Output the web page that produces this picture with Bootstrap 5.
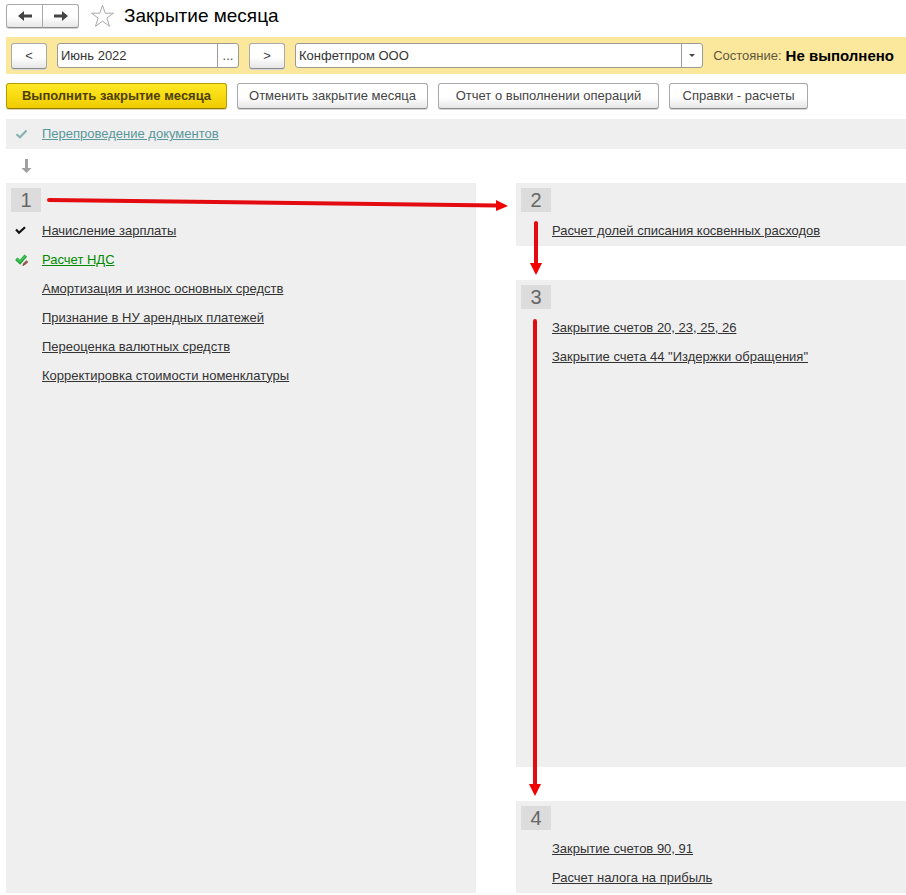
<!DOCTYPE html>
<html lang="ru">
<head>
<meta charset="utf-8">
<meta name="viewport" content="width=device-width, initial-scale=1">
<title>Закрытие месяца</title>
<link rel="stylesheet" href="https://cdn.jsdelivr.net/npm/bootstrap@5.3.0/dist/css/bootstrap.min.css">
<style>
  body { font-family: "Liberation Sans", Arial, sans-serif; font-size: 13px; line-height: 16px; color: #444; background: #fff; }
  .page { padding: 0 0 2px 6px; }
  .title-row { height: 37px; padding-bottom: 6px; }
  .title-row h1 { font-size: 19px; line-height: 24px; color: #000; }
  .btn-plain, .btn-run {
    --bs-btn-font-size: 13px; --bs-btn-line-height: 16px; --bs-btn-padding-y: 4px; --bs-btn-padding-x: 4px;
    --bs-btn-border-radius: 3px; --bs-btn-color: #444; --bs-btn-border-color: #a9a9a9;
    --bs-btn-hover-color: #222; --bs-btn-hover-border-color: #888; height: 26px;
    background: linear-gradient(#fff 55%, #e6e6e6); border-bottom-color: #8c8c8c;
    box-shadow: 0 1px 0 #d4d4d4;
  }
  .btn-run { --bs-btn-color: #4d4000; --bs-btn-border-color: #b59c00; font-weight: 700;
    background: linear-gradient(#ffe924, #f0cc00); border-bottom-color: #8f7b00; box-shadow: 0 1px 0 #dcd6b4; }
  .nav-history .btn { width: 37px; height: 24px; padding: 0; }
  .step-btn { width: 36px; }
  .filter-bar { background: #fbe89c; padding: 5px 12px 5px 5px; min-height: 37px; column-gap: 10px; }
  .field { height: 25px; border: 1px solid #9b9b93; border-radius: 3px; background: #fff; }
  .field input, .field select { font-size: 13px; line-height: 16px; color: #333; border: 0; background: none; padding: 0 3px; outline-offset: -2px; appearance: none; width: 100%; min-width: 0; }
  .field-end { width: 21px; border: 0; border-left: 1px solid #9b9b93; background: none; padding: 0; color: #444; }
  .period { width: 182px; }
  .caret-box { pointer-events: none; flex: none; }
  .state-label { color: #5e573c; }
  .state-value { color: #000; font-size: 15px; }
  .actions { column-gap: 10px; row-gap: 8px; padding-top: 9px; }
  .w-cancel { width: 191px; } .w-report { width: 221px; } .w-refs { width: 139px; } .w-run { width: 221px; }
  .panel { background: #efefef; }
  .repost { height: 30px; margin-top: 10px; }
  .flow-down { height: 34px; padding-left: 15px; }
  .board { display: grid; grid-template-columns: 47fr 39fr; column-gap: 40px; }
  .right-col { row-gap: 34px; }
  .stage { padding: 5px 5px 1px; }
  .stage-num { width: 30px; height: 24px; background: #dcdcdc; color: #666; font-size: 20px; line-height: 25px; text-align: center; margin-bottom: 4px; }
  .op { height: 29px; }
  .op-icon { width: 31px; }
  .repost .op-icon { width: 36px; padding-left: 9px; }
  .op a { color: #333; text-underline-offset: 1px; }
  .repost a { color: #5a979b; text-underline-offset: 1px; }
  .op a.done { color: #008a00; }
  .flow { left: 0; top: 0; overflow: visible; pointer-events: none; }
</style>
</head>
<body>
<div class="page d-flex flex-column min-vh-100">
  <header class="title-row d-flex align-items-center">
    <div class="btn-group nav-history" role="group" aria-label="Навигация">
      <button type="button" class="btn btn-plain d-flex align-items-center justify-content-center" aria-label="Назад"><svg width="14" height="12" viewBox="0 0 14 12"><path d="M0 6 6 1v3.600h8v2.800H6V11z" fill="#444"/></svg></button>
      <button type="button" class="btn btn-plain d-flex align-items-center justify-content-center" aria-label="Вперед"><svg width="14" height="12" viewBox="0 0 14 12"><path d="M14 6 8 1v3.600H0v2.800h8V11z" fill="#444"/></svg></button>
    </div>
    <button type="button" class="btn border-0 p-0 d-flex ms-2 me-2" aria-label="В избранное"><svg width="29" height="24" viewBox="0 0 29 24"><path d="M15.500 1.200 18.200 9.200H26.500L19.900 14 22.500 22.300 15.500 17.200 8.500 22.300 11.100 14 4.500 9.200H12.800z" fill="#fff" stroke="#aaa"/></svg></button>
    <h1 class="m-0 fw-normal">Закрытие месяца</h1>
  </header>

  <form class="filter-bar d-flex align-items-center">
    <button type="button" class="btn btn-plain step-btn" aria-label="Предыдущий месяц">&lt;</button>
    <div class="field period d-flex">
      <input type="text" value="Июнь 2022" aria-label="Период">
      <button type="button" class="field-end flex-shrink-0" aria-label="Выбрать период">...</button>
    </div>
    <button type="button" class="btn btn-plain step-btn" aria-label="Следующий месяц">&gt;</button>
    <div class="field d-flex flex-grow-1">
      <select aria-label="Организация"><option>Конфетпром ООО</option></select>
      <span class="field-end caret-box d-flex align-items-center justify-content-center"><svg width="6" height="3" viewBox="0 0 6 3"><path d="M0 0h6L3 3z" fill="#444"/></svg></span>
    </div>
    <div class="d-flex align-items-center gap-1">
      <span class="state-label">Состояние:</span>
      <strong class="state-value">Не выполнено</strong>
    </div>
  </form>

  <div class="d-flex flex-wrap actions">
    <button type="button" class="btn btn-run w-run">Выполнить закрытие месяца</button>
    <button type="button" class="btn btn-plain w-cancel">Отменить закрытие месяца</button>
    <button type="button" class="btn btn-plain w-report">Отчет о выполнении операций</button>
    <button type="button" class="btn btn-plain w-refs">Справки - расчеты</button>
  </div>

  <div class="panel repost d-flex align-items-center">
    <span class="op-icon d-flex"><svg width="13" height="10" viewBox="0 0 13 10"><path d="M1.500 5.200 5 8.300 11.500 1.500" fill="none" stroke="#84b0af" stroke-width="2"/></svg></span>
    <a href="#">Перепроведение документов</a>
  </div>
  <div class="flow-down d-flex align-items-center"><svg width="11" height="14" viewBox="0 0 11 14"><path d="M4 0h3v9h3.500L5.500 14 .5 9H4z" fill="#a0a0a0"/></svg></div>

  <main class="board flex-grow-1 position-relative">
    <section class="panel stage">
      <div class="stage-num">1</div>
      <div class="op d-flex align-items-center"><span class="op-icon d-flex ps-1"><svg width="11" height="9" viewBox="0 0 11 9"><path d="M1 3.600 4 6.800 10 1.200" fill="none" stroke="#111" stroke-width="2.200"/></svg></span><a href="#">Начисление зарплаты</a></div>
      <div class="op d-flex align-items-center"><span class="op-icon d-flex ps-1"><svg width="14" height="12" viewBox="0 0 14 12"><path d="M1.300 4.700 5 8.200 10.800 1.600" fill="none" stroke="#24a63c" stroke-width="3.400"/><path d="M1.600 4.600 5 7.500 10.400 1.700" fill="none" stroke="#3fc653" stroke-width="1.600"/><path d="M11.500 6.200 13.300 8 10 11.100 7.600 11.800 8.100 9.400z" fill="#91544b"/><path d="m7.600 11.800.3-1.400 1.100 1z" fill="#333"/></svg></span><a href="#" class="done">Расчет НДС</a></div>
      <div class="op d-flex align-items-center"><span class="op-icon"></span><a href="#">Амортизация и износ основных средств</a></div>
      <div class="op d-flex align-items-center"><span class="op-icon"></span><a href="#">Признание в НУ арендных платежей</a></div>
      <div class="op d-flex align-items-center"><span class="op-icon"></span><a href="#">Переоценка валютных средств</a></div>
      <div class="op d-flex align-items-center"><span class="op-icon"></span><a href="#">Корректировка стоимости номенклатуры</a></div>
    </section>

    <div class="d-flex flex-column right-col">
      <section class="panel stage">
        <div class="stage-num">2</div>
        <div class="op d-flex align-items-center"><span class="op-icon"></span><a href="#">Расчет долей списания косвенных расходов</a></div>
      </section>
      <section class="panel stage flex-grow-1">
        <div class="stage-num">3</div>
        <div class="op d-flex align-items-center"><span class="op-icon"></span><a href="#">Закрытие счетов 20, 23, 25, 26</a></div>
        <div class="op d-flex align-items-center"><span class="op-icon"></span><a href="#">Закрытие счета 44 "Издержки обращения"</a></div>
      </section>
      <section class="panel stage">
        <div class="stage-num">4</div>
        <div class="op d-flex align-items-center"><span class="op-icon"></span><a href="#">Закрытие счетов 90, 91</a></div>
        <div class="op d-flex align-items-center"><span class="op-icon"></span><a href="#">Расчет налога на прибыль</a></div>
      </section>
    </div>

    <svg class="flow position-absolute" width="900" height="710" viewBox="0 0 900 710" aria-hidden="true">
      <g stroke="#e30b0f" stroke-width="4" stroke-linecap="round">
        <path d="M43 17 491 22.500M530 40V82M529 138V603"/>
      </g>
      <path d="M490 17 502 23 490 28zM524 80h12l-6 12zM523 601h12l-6 12z" fill="#f20000"/>
    </svg>
  </main>
</div>
<script src="https://cdn.jsdelivr.net/npm/bootstrap@5.3.0/dist/js/bootstrap.bundle.min.js"></script>
</body>
</html>
